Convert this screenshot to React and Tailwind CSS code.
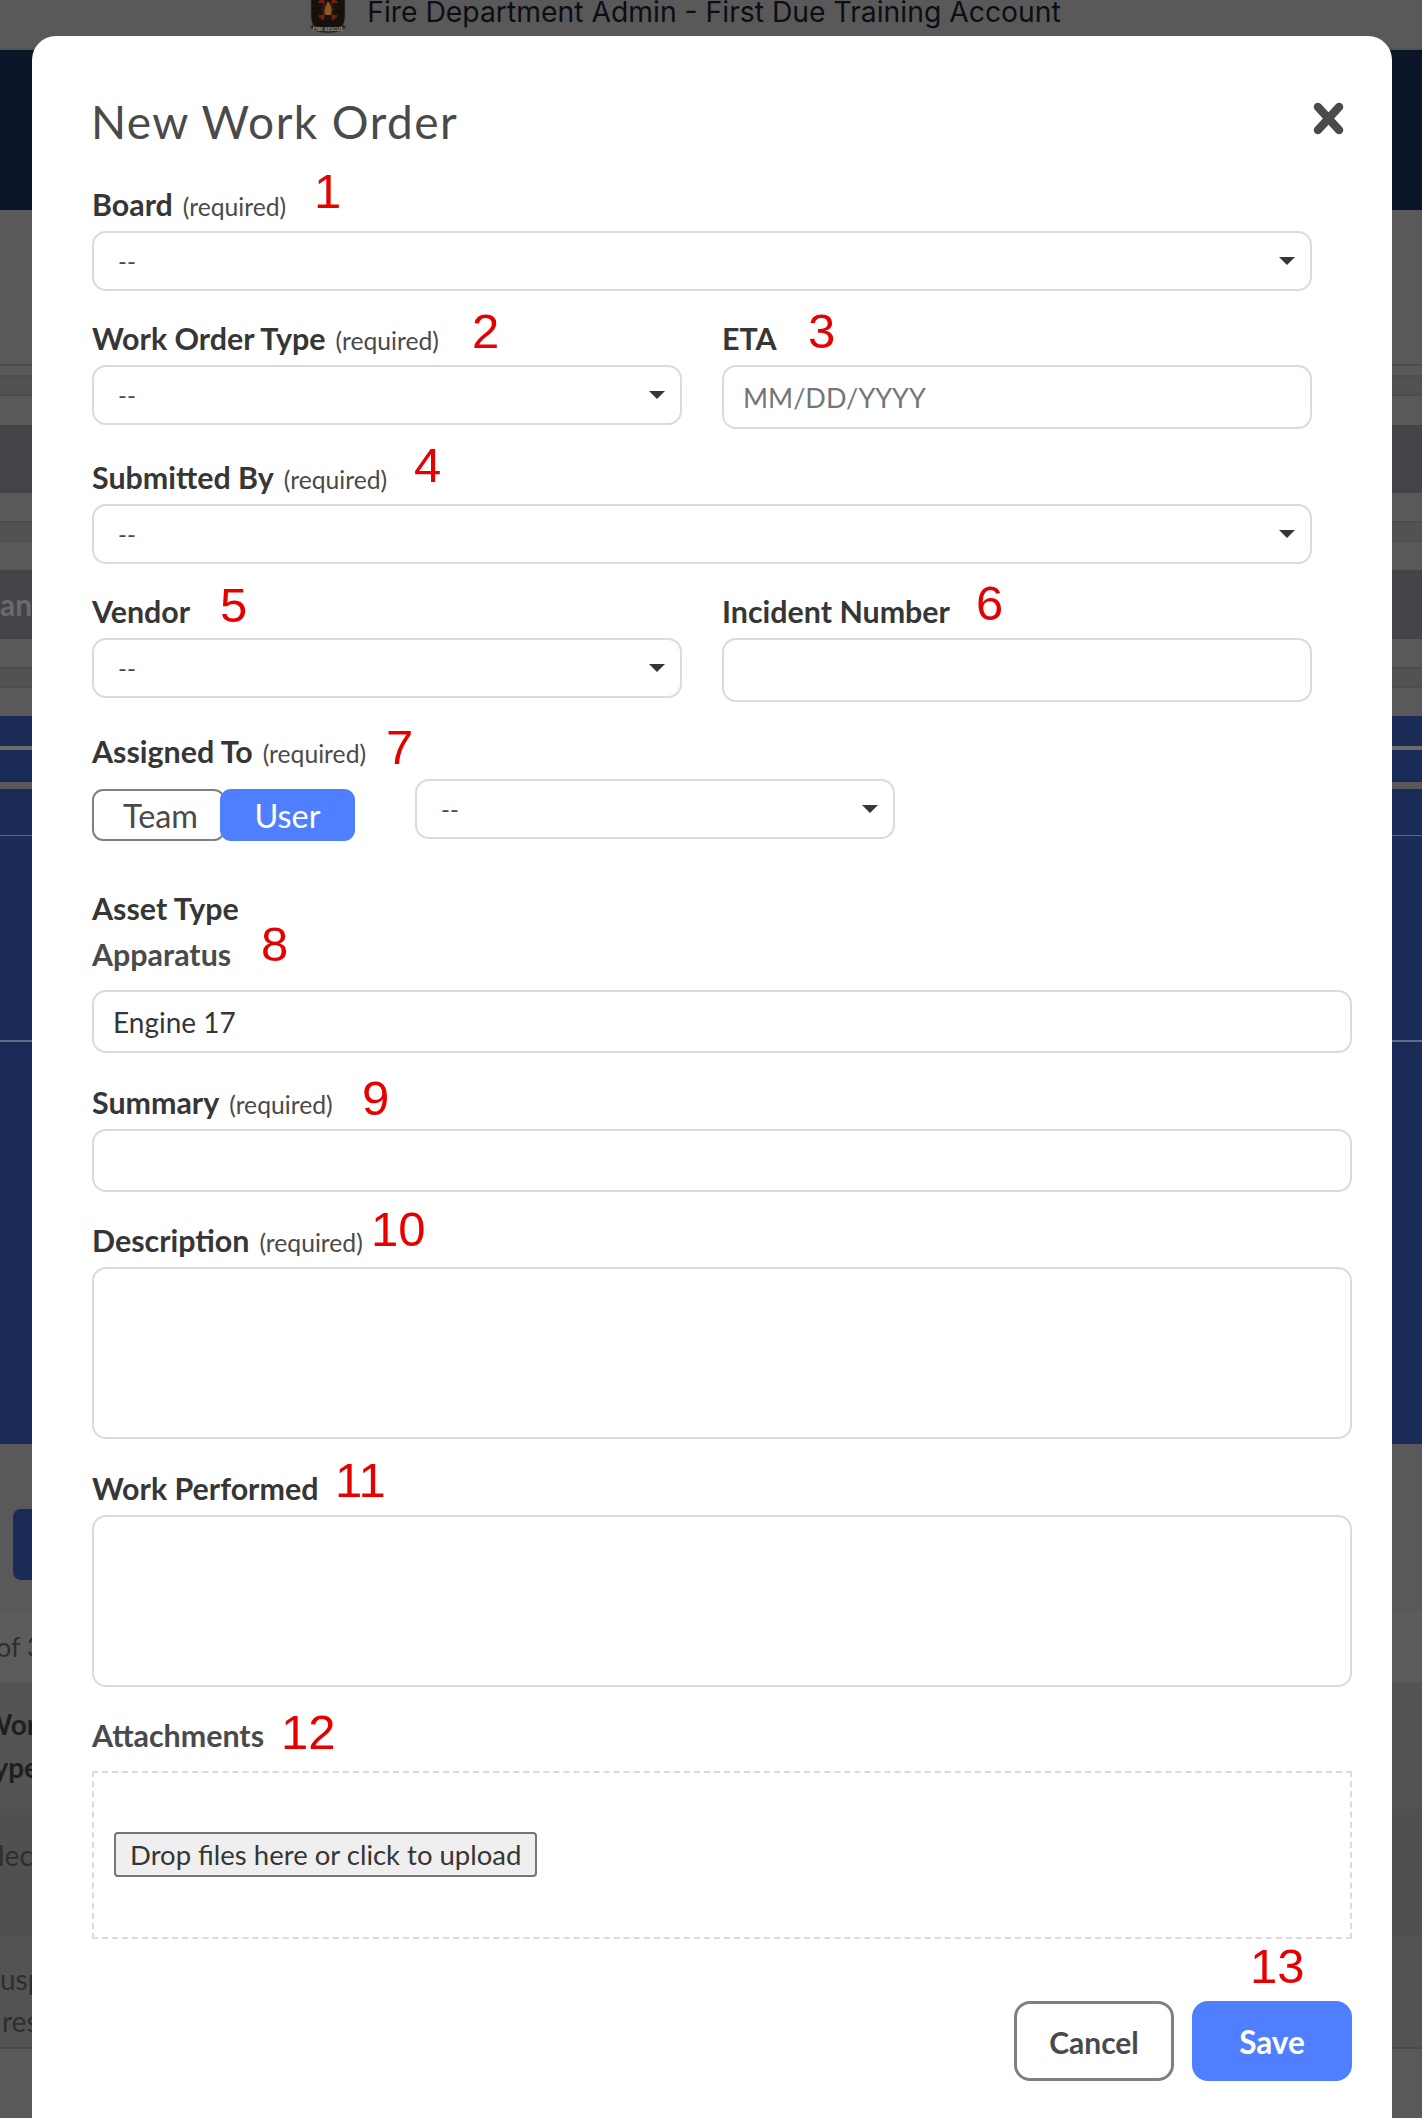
import React from "react";

const Num = ({ children, className }) => (
  <span className={`absolute [font-family:'Liberation_Sans',Arial,sans-serif] text-[49px] leading-[36px] font-normal text-[#e60000] ${className}`}>{children}</span>
);

const Label = ({ text, req, tone = "text-[#363636]", className = "", mb = "mb-[12px]", children }) => (
  <div className={`relative h-[30px] leading-[30px] whitespace-nowrap ${mb} ${className}`}>
    <span className={`text-[30.4px] font-bold ${tone}`}>{text}</span>
    {req && <span className="ml-[10px] text-[24.7px] text-[#4a4a4a]">(required)</span>}
    {children}
  </div>
);

const Select = ({ className = "" }) => (
  <div className={`relative h-[60px] ${className}`}>
    <select className="h-full w-full appearance-none rounded-[14px] border-2 border-[#dbdbdb] bg-white pl-[24px] text-[24px] text-[#4a4a4a] outline-none">
      <option>--</option>
    </select>
    <svg className="absolute right-[17px] top-[26px]" width="16" height="8" viewBox="0 0 16 8">
      <path d="M0 0H16L8 8Z" fill="#363636" />
    </svg>
  </div>
);

const Input = ({ placeholder, defaultValue, h = "h-[64px]" }) => (
  <input
    placeholder={placeholder}
    defaultValue={defaultValue}
    className={`${h} w-full rounded-[14px] border-2 border-[#dbdbdb] bg-white px-[19px] text-[28px] text-[#363636] outline-none placeholder:text-[27px] placeholder:text-[#757575]`}
  />
);

const Area = () => (
  <textarea className="block h-[172px] w-full resize-none rounded-[14px] border-2 border-[#dbdbdb] bg-white outline-none" />
);

const Logo = () => (
  <svg className="shrink-0" width="38" height="38" viewBox="0 0 38 38">
    <path d="M2 -4H36L36 20C36 24 35 27 34 29L37 31L31 35Q19 39 7 35L1 31L4 29C3 27 2 24 2 20Z" fill="#14100c" stroke="#4a4232" strokeWidth="0.8" />
    <circle cx="19" cy="13" r="12" fill="#701f14" />
    <path d="M14 -3H24L22 8L31 6V20L22 18L24 29H14L16 18L7 20V6L16 8Z" fill="#17100c" />
    <circle cx="19" cy="13" r="6.5" fill="#3a1810" />
    <path d="M19 5C22 10 24 14 21.5 19H16.5C14 15 17 10 19 5Z" fill="#8a5a22" />
    <path d="M3 29Q19 35 35 29L33 34Q19 38 5 34Z" fill="#3c3628" />
    <text x="19" y="34.5" fontSize="5" textAnchor="middle" fill="#9a9484" fontWeight="700" fontFamily="Lato, sans-serif">FIRE RESCUE</text>
  </svg>
);

export default function App() {
  return (
    <div className="relative h-[2118px] w-full overflow-hidden bg-[#595959] [font-family:Lato,sans-serif]">
      {/* dimmed page behind the dialog */}
      <div className="flex h-[50px] items-start justify-center gap-[20px] border-b-2 border-[#4f5358] pr-[52px]">
        <div className="-mt-[4px] flex h-[38px] w-[38px] items-center justify-center"><Logo /></div>
        <div className="-mt-[6px] text-[28.3px] leading-[36px] text-[#0c0e14] [font-family:Inter,sans-serif]">
          Fire Department Admin - First Due Training Account
        </div>
      </div>
      <div className="h-[160px] bg-[#0a1628]" />
      <div className="h-[154px]" />
      <div className="h-[11px] border-t-2 border-[#4d4d4d]" />
      <div className="h-[21px] border-y-2 border-[#4d4d4d] bg-[#505254]" />
      <div className="h-[29px]" />
      <div className="h-[68px] bg-[#434447]" />
      <div className="h-[28px]" />
      <div className="h-[21px] border-y-2 border-[#4d4d4d] bg-[#505254]" />
      <div className="h-[28px]" />
      <div className="flex h-[69px] items-center overflow-hidden bg-[#434447] text-[30px] font-bold text-[#6b6b6b]">an</div>
      <div className="h-[28px]" />
      <div className="h-[21px] border-y-2 border-[#4d4d4d] bg-[#505254]" />
      <div className="h-[28px]" />
      <div className="h-[30px] bg-[#1b2b58]" />
      <div className="h-[4px] bg-[#6a6a6a]" />
      <div className="h-[32px] bg-[#1b2b58]" />
      <div className="h-[7px] bg-[#595959]" />
      <div className="h-[47px] border-b border-[#5a6a8a] bg-[#1b2b58]" />
      <div className="h-[206px] border-b-2 border-[#5f6a86] bg-[#1b2b58]" />
      <div className="h-[402px] bg-[#1b2b58]" />
      <div className="h-[65px]" />
      <div className="ml-[13px] h-[71px] w-[60px] rounded-[8px] bg-[#1b2b58]" />
      <div className="h-[33px]" />
      <div className="flex h-[69px] items-center bg-[#5c5c5c] text-[27px] whitespace-nowrap text-[#2e2e2e]">
        <div className="-ml-[4px]">of 3</div>
      </div>
      <div className="flex h-[127px] flex-col justify-center bg-[#545454] text-[28px] leading-[43px] font-bold whitespace-nowrap text-[#1f1f1f]">
        <div className="-ml-[17px]">Work</div>
        <div className="-ml-[21px]">Type</div>
      </div>
      <div className="flex h-[128px] items-start bg-[#505050] pt-[25px] text-[28px] whitespace-nowrap text-[#2e2e2e]">
        <div className="-ml-[2px]">lec</div>
      </div>
      <div className="flex h-[112px] flex-col justify-center border-b-2 border-[#4a4a4a] bg-[#535353] pt-[16px] text-[28px] leading-[42px] whitespace-nowrap text-[#2e2e2e]">
        <div>usp</div>
        <div className="ml-[2px]">res</div>
      </div>

      {/* dialog */}
      <div className="absolute left-[32px] top-[36px] h-[2082px] w-[1360px] rounded-t-[24px] bg-white pl-[60px] pr-[40px] pt-[58px]">
        <div className="mb-[39px] flex h-[56px] items-center justify-between">
          <h1 className="-ml-[1px] text-[46px] leading-[56px] font-normal tracking-[1.45px] text-[#4a4a4a]">New Work Order</h1>
          <svg className="absolute left-[1281px] top-[66px]" width="31" height="33" viewBox="0 0 31 33">
            <path d="M5 5L26 28M26 5L5 28" stroke="#4a4a4a" strokeWidth="8.5" strokeLinecap="round" />
          </svg>
        </div>

        <div className="w-[1220px]">
          <Label text="Board" req>
            <Num className="left-[222px] -top-[16px]">1</Num>
          </Label>
          <Select />

          <div className="mt-[32px] grid grid-cols-[590px_590px] items-start gap-x-[40px]">
            <div>
              <Label text="Work Order Type" req>
                <Num className="left-[380px] -top-[10px]">2</Num>
              </Label>
              <Select />
            </div>
            <div>
              <Label text="ETA">
                <Num className="left-[86px] -top-[10px]">3</Num>
              </Label>
              <Input placeholder="MM/DD/YYYY" />
            </div>
          </div>

          <Label text="Submitted By" req className="mt-[33px]">
            <Num className="left-[322px] -top-[15px]">4</Num>
          </Label>
          <Select />

          <div className="mt-[32px] grid grid-cols-[590px_590px] items-start gap-x-[40px]">
            <div>
              <Label text="Vendor">
                <Num className="left-[128px] -top-[9px]">5</Num>
              </Label>
              <Select />
            </div>
            <div>
              <Label text="Incident Number">
                <Num className="left-[254px] -top-[11px]">6</Num>
              </Label>
              <Input />
            </div>
          </div>

          <Label text="Assigned To" req className="mt-[34px]" mb="mb-[13px]">
            <Num className="left-[294px] -top-[7px]">7</Num>
          </Label>
          <div className="flex items-start">
            <div className="mt-[10px] flex h-[52px] text-[32.4px]">
              <div className="flex w-[133px] items-center justify-center rounded-[11px] border-2 border-[#808080] bg-white pl-[4px] pt-[3px] text-[#4a4a4a]">Team</div>
              <div className="relative -ml-[5px] flex w-[135px] items-center justify-center rounded-[11px] bg-[#4f7fff] pt-[3px] text-white">User</div>
            </div>
            <Select className="ml-[60px] w-[480px]" />
          </div>
        </div>

        <Label text="Asset Type" className="mt-[52px]" mb="mb-0" />
        <Label text="Apparatus" tone="text-[#4a4a4a]" className="mt-[16px]" mb="mb-[21px]">
          <Num className="left-[169px] -top-[13px]">8</Num>
        </Label>
        <Input defaultValue="Engine 17" h="h-[63px]" />

        <Label text="Summary" req className="mt-[34px]">
          <Num className="left-[270px] -top-[7px]">9</Num>
        </Label>
        <Input h="h-[63px]" />

        <Label text="Description" req className="mt-[33px]">
          <Num className="left-[279px] -top-[14px]">10</Num>
        </Label>
        <Area />

        <Label text="Work Performed" className="mt-[34px]">
          <Num className="left-[243px] -top-[11px]">11</Num>
        </Label>
        <Area />

        <Label text="Attachments" tone="text-[#4a4a4a]" className="mt-[33px]" mb="mb-[21px]">
          <Num className="left-[189px] -top-[6px]">12</Num>
        </Label>
        <div className="flex h-[168px] items-center border-2 border-dashed border-[#dbdbdb] pb-[2px] pl-[20px]">
          <button className="h-[45px] rounded-[4px] border-2 border-[#767676] bg-[#efefef] px-[14px] text-[27.5px] text-[#363636]">
            Drop files here or click to upload
          </button>
        </div>

        <div className="relative mt-[62px] flex justify-end gap-[18px]">
          <button className="h-[80px] w-[160px] rounded-[16px] border-[3px] border-[#808080] bg-white pt-[2px] text-[30px] font-bold text-[#4a4a4a]">Cancel</button>
          <div className="relative">
            <Num className="left-[58px] -top-[53px]">13</Num>
            <button className="h-[80px] w-[160px] rounded-[16px] bg-[#4f7fff] pt-[3px] text-[31.5px] font-bold text-white">Save</button>
          </div>
        </div>
      </div>
    </div>
  );
}
